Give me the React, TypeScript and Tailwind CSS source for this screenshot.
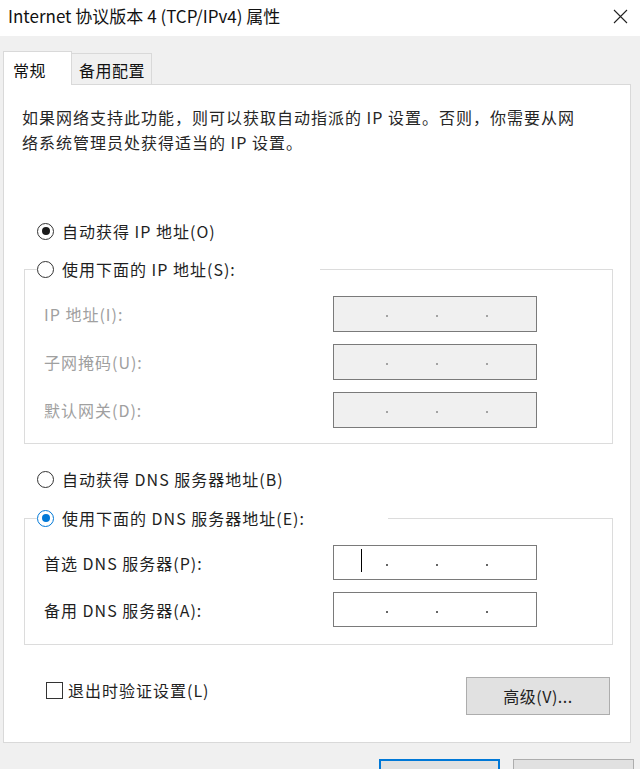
import type { ReactNode } from 'react'

// ============================================
// Small controls
// ============================================

function Radio({ checked, blue }: { checked?: boolean; blue?: boolean }) {
  return (
    <span
      className={`w-[17px] h-[17px] rounded-full border flex items-center justify-center bg-white shrink-0 ${
        blue ? 'border-[#0078d7]' : 'border-[#333333]'
      }`}
    >
      {checked && (
        <span className={`w-[8px] h-[8px] rounded-full ${blue ? 'bg-[#0078d7]' : 'bg-[#1a1a1a]'}`} />
      )}
    </span>
  )
}

function RadioRow({ label, checked, blue }: { label: string; checked?: boolean; blue?: boolean }) {
  return (
    <div className="h-[20px] flex items-center gap-[8px]">
      <Radio checked={checked} blue={blue} />
      <span className="text-[#1f1f1f]">{label}</span>
    </div>
  )
}

function IpBox({ disabled, cursor, h }: { disabled?: boolean; cursor?: boolean; h: string }) {
  return (
    <div
      className={`w-[204px] ${h} border border-[#7a7a7a] flex items-center relative ${
        disabled ? 'bg-[#f0f0f0]' : 'bg-white'
      }`}
    >
      {cursor && <span className="absolute left-[27px] top-[3px] w-px h-[23px] bg-black" />}
      <div className="flex items-center gap-[48px] pl-[52px] mt-[4px]">
        {[0, 1, 2].map(i => (
          <span
            key={i}
            className={`w-[2px] h-[2px] rounded-full ${disabled ? 'bg-[#8a8a8a]' : 'bg-[#333333]'}`}
          />
        ))}
      </div>
    </div>
  )
}

function Field({ label, children, disabled }: { label: string; children: ReactNode; disabled?: boolean }) {
  return (
    <div className="flex items-center">
      <span className={`w-[289px] ${disabled ? 'text-[#a0a0a0]' : 'text-[#1f1f1f]'}`}>{label}</span>
      {children}
    </div>
  )
}

// ============================================
// Main Component
// ============================================

export default function App() {
  return (
    <div className="w-[640px] h-[769px] overflow-hidden bg-[#f0f0f0] font-['Noto_Sans_CJK_SC','Microsoft_YaHei',sans-serif] text-[16px] tracking-[1px]">
      {/* Title bar */}
      <div className="h-[36px] bg-white flex items-center justify-between pl-[8px] pr-[12px] pb-[5px]">
        <span className="text-[17px] text-[#111111] tracking-normal">Internet 协议版本 4 (TCP/IPv4) 属性</span>
        <svg width="15" height="15" viewBox="0 0 15 15" className="mt-[1px]">
          <path d="M1 1 L14 14 M14 1 L1 14" stroke="#222" strokeWidth="1.1" />
        </svg>
      </div>

      {/* Tabs */}
      <div className="flex items-end pl-[3px] h-[33px] mt-[15px] tracking-[0.5px]">
        <div className="relative z-10 -mb-px h-[34px] w-[69px] bg-white border border-b-0 border-[#d9d9d9] pl-[9px] pt-[6px] text-[#111111]">
          常规
        </div>
        <div className="h-[31px] w-[80px] bg-[#f0f0f0] border border-l-0 border-b-0 border-[#d9d9d9] pl-[7px] pt-[4px] text-[#111111]">
          备用配置
        </div>
      </div>

      {/* Panel */}
      <div className="ml-[3px] w-[628px] h-[659px] bg-white border border-[#d9d9d9] flex flex-col">
        <p className="mt-[20px] ml-[18px] w-[562px] leading-[25px] text-[#262626]">
          如果网络支持此功能，则可以获取自动指派的 IP 设置。否则，你需要从网络系统管理员处获得适当的 IP 设置。
        </p>

        <div className="mt-[66px] ml-[33px]">
          <RadioRow label="自动获得 IP 地址(O)" checked />
        </div>

        <fieldset className="mt-[18px] ml-[20px] w-[589px] border border-[#dcdcdc] pb-[15px]">
          <legend className="ml-[12px] w-[283px]">
            <RadioRow label="使用下面的 IP 地址(S):" />
          </legend>
          <div className="pt-[17px] pl-[19px] flex flex-col gap-[12px]">
            <Field label="IP 地址(I):" disabled>
              <IpBox disabled h="h-[36px]" />
            </Field>
            <Field label="子网掩码(U):" disabled>
              <IpBox disabled h="h-[36px]" />
            </Field>
            <Field label="默认网关(D):" disabled>
              <IpBox disabled h="h-[36px]" />
            </Field>
          </div>
        </fieldset>

        <div className="mt-[25px] ml-[33px]">
          <RadioRow label="自动获得 DNS 服务器地址(B)" />
        </div>

        <fieldset className="mt-[19px] ml-[20px] w-[589px] border border-[#dcdcdc] pb-[17px]">
          <legend className="ml-[12px] w-[351px]">
            <RadioRow label="使用下面的 DNS 服务器地址(E):" checked blue />
          </legend>
          <div className="pt-[17px] pl-[19px] flex flex-col gap-[12px]">
            <Field label="首选 DNS 服务器(P):">
              <IpBox cursor h="h-[35px]" />
            </Field>
            <Field label="备用 DNS 服务器(A):">
              <IpBox h="h-[35px]" />
            </Field>
          </div>
        </fieldset>

        <div className="mt-[32px] ml-[20px] w-[586px] flex items-start justify-between">
          <div className="mt-[3px] ml-[22px] h-[20px] flex items-center gap-[5px]">
            <span className="w-[17px] h-[17px] border border-[#333333] bg-white" />
            <span className="text-[#1f1f1f]">退出时验证设置(L)</span>
          </div>
          <button className="w-[144px] h-[38px] bg-[#e1e1e1] border border-[#adadad] text-[#1f1f1f] tracking-[0.5px]">
            高级(V)...
          </button>
        </div>
      </div>

      {/* Dialog buttons, only their top edge is in view */}
      <div className="mt-[16px] pl-[379px] flex gap-[13px]">
        <div className="w-[121px] h-[38px] bg-[#e1e1e1] border-2 border-[#0078d7]" />
        <div className="w-[121px] h-[38px] bg-[#e1e1e1] border border-[#adadad]" />
      </div>
    </div>
  )
}
